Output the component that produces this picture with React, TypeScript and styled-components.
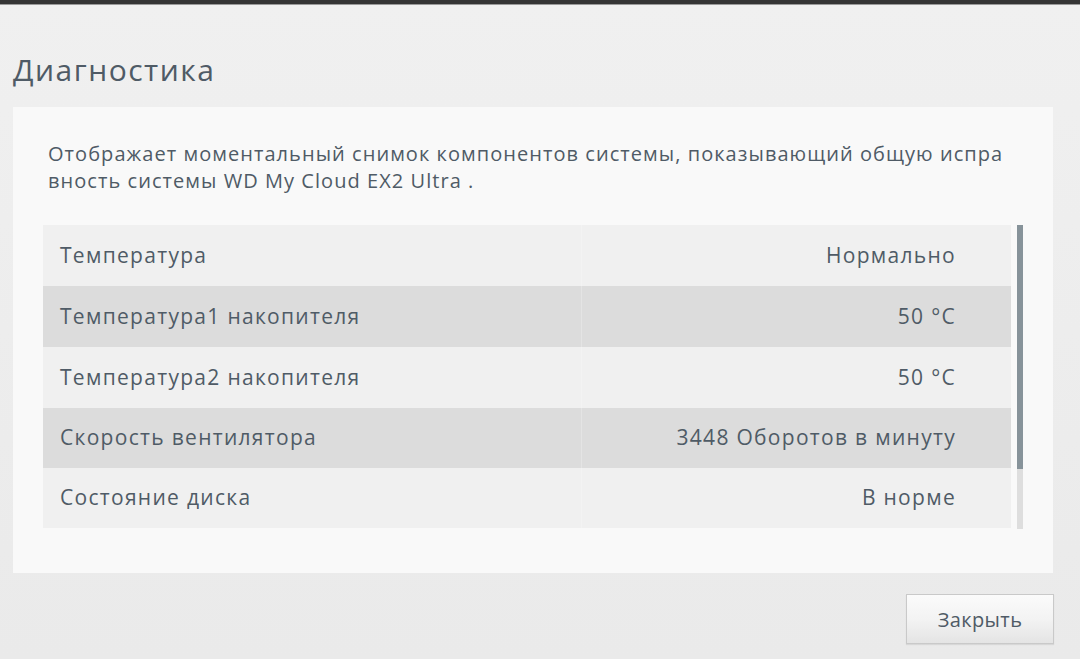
import styled, { createGlobalStyle } from "styled-components";

const GlobalStyle = createGlobalStyle`
    html, body {
        margin: 0;
        padding: 0;
        height: 100%;
    }
    body {
        background: linear-gradient(180deg, #f0f0f0 0%, #eaeaea 100%);
        font-family: "Open Sans", "Noto Sans", sans-serif;
        color: #4f5b66;
        overflow: hidden;
    }
`;

interface Row {
    label: string;
    value: string;
}

const rows: Row[] = [
    { label: "Температура", value: "Нормально" },
    { label: "Температура1 накопителя", value: "50 °C" },
    { label: "Температура2 накопителя", value: "50 °C" },
    { label: "Скорость вентилятора", value: "3448 Оборотов в минуту" },
    { label: "Состояние диска", value: "В норме" },
];

const App = () => {
    return (
        <>
            <GlobalStyle />
            <TopBar />
            <Page>
                <Title>Диагностика</Title>
                <Panel>
                    <Description>
                        Отображает моментальный снимок компонентов системы, показывающий общую испра
                        <br />
                        вность системы WD My Cloud EX2 Ultra .
                    </Description>
                    <TableArea>
                        <Table>
                            {rows.map((row, i) => (
                                <TableRow key={row.label} $dark={i % 2 === 1}>
                                    <LabelCell>{row.label}</LabelCell>
                                    <ValueCell $dark={i % 2 === 1}>{row.value}</ValueCell>
                                </TableRow>
                            ))}
                        </Table>
                        <ScrollTrack>
                            <ScrollThumb />
                        </ScrollTrack>
                    </TableArea>
                </Panel>
                <Footer>
                    <CloseButton>Закрыть</CloseButton>
                </Footer>
            </Page>
        </>
    );
};

export default App;

const TopBar = styled.div`
    height: 4px;
    background: #353535;
    border-bottom: 1px solid #9a9a9a;
`

const Page = styled.div`
    padding: 0 27px 0 13px;
`

const Title = styled.h1`
    margin: 0;
    padding-top: 45px;
    height: 57px;
    font-size: 30px;
    font-weight: 400;
    line-height: 40px;
    color: #4f5b66;
    letter-spacing: 1.5px;
`

const Panel = styled.div`
    height: 466px;
    box-sizing: border-box;
    background: #f9f9f9;
    padding: 33px 30px 0;
`

const Description = styled.p`
    margin: 0 0 31px 5px;
    font-size: 20px;
    line-height: 27px;
    letter-spacing: 1.05px;
    color: #4f5b66;
    white-space: nowrap;
`

const TableArea = styled.div`
    display: flex;
    gap: 6px;
`

const Table = styled.div`
    width: 968px;
    display: flex;
    flex-direction: column;
`

const TableRow = styled.div<{ $dark: boolean }>`
    display: grid;
    grid-template-columns: 538px 1fr;
    height: 61px;
    background: ${({ $dark }) => ($dark ? "#dcdcdc" : "#f0f0f0")};
    font-size: 21px;
    letter-spacing: 1.3px;
    color: #4f5b66;
    &:nth-child(4), &:nth-child(5) {
        height: 60px;
    }
`

const LabelCell = styled.div`
    display: flex;
    align-items: center;
    padding-left: 17px;
    padding-bottom: 2px;
`

const ValueCell = styled.div<{ $dark: boolean }>`
    display: flex;
    align-items: center;
    justify-content: flex-end;
    padding-right: 55px;
    padding-bottom: 2px;
    border-left: 1px solid ${({ $dark }) => ($dark ? "#e4e4e4" : "#f3f3f3")};
`

const ScrollTrack = styled.div`
    width: 6px;
    height: 304px;
    background: #dedede;
    display: flex;
    flex-direction: column;
`

const ScrollThumb = styled.div`
    height: 244px;
    background: #87939a;
`

const Footer = styled.div`
    display: flex;
    justify-content: flex-end;
    padding-top: 21px;
    margin-right: -1px;
`

const CloseButton = styled.button`
    width: 148px;
    height: 50px;
    border: 1px solid #c9c9c9;
    background: linear-gradient(180deg, #fbfbfb 0%, #f3f3f3 50%, #e4e4e4 100%);
    font-family: "Open Sans", "Noto Sans", sans-serif;
    font-size: 20px;
    letter-spacing: 0.4px;
    color: #4f5b66;
    cursor: pointer;
    box-shadow: 0 1px 1px rgba(0, 0, 0, 0.08);
`
